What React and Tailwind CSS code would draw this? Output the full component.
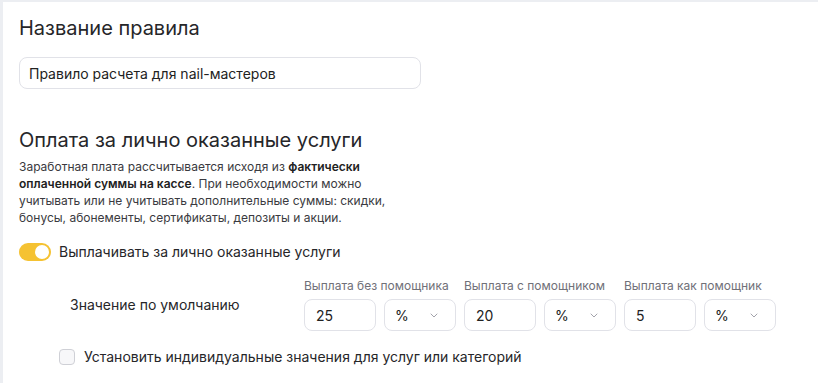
import { useState } from 'react'

const payouts = [
  { label: 'Выплата без помощника', value: '25' },
  { label: 'Выплата с помощником', value: '20' },
  { label: 'Выплата как помощник', value: '5' },
]

function Chevron() {
  return (
    <svg width="8" height="5" viewBox="0 0 8 5" fill="none" className="text-[#a3a3ab]">
      <path d="M1 1l3 3 3-3" stroke="currentColor" strokeWidth="1" strokeLinecap="round" strokeLinejoin="round" />
    </svg>
  )
}

function PayoutField({ label, value }) {
  return (
    <div className="flex flex-col">
      <div className="text-[12px] leading-4 text-[#707078] whitespace-nowrap">{label}</div>
      <div className="flex gap-2 mt-[5px]">
        <div className="w-[72px] h-8 rounded-lg border border-[#e1e2e8] bg-white flex items-center pl-[11px] text-[14px] text-[#222]">
          {value}
        </div>
        <div className="w-[72px] h-8 rounded-lg border border-[#e1e2e8] bg-white flex items-center justify-between pl-[10px] pr-[17px] text-[14px] text-[#222]">
          <span>%</span>
          <Chevron />
        </div>
      </div>
    </div>
  )
}

export default function App() {
  const [enabled, setEnabled] = useState(true)

  return (
    <div className="min-h-screen bg-[#eceef2] pl-[3px] pt-[2px]">
      <div
        className="bg-white min-h-[381px] pl-4 pt-3 text-[#262629]"
        style={{ fontFamily: 'Inter, "Noto Sans", sans-serif' }}
      >
        {/* Rule name */}
        <h2 className="text-[20px] leading-7 font-normal">Название правила</h2>
        <div className="mt-[15px] w-[402px] h-8 rounded-lg border border-[#e1e2e8] flex items-center pl-[9px] text-[14px] text-[#222]">
          Правило расчета для nail-мастеров
        </div>

        {/* Personal services */}
        <h2 className="mt-[37px] text-[20px] leading-7 font-normal">Оплата за лично оказанные услуги</h2>
        <p className="mt-[4px] w-[385px] text-[12px] leading-[17px] text-[#3a3a40]">
          Заработная плата рассчитывается исходя из <b className="font-semibold text-[#222]">фактически</b>{' '}
          <b className="font-semibold text-[#222]">оплаченной суммы на кассе</b>. При необходимости можно
          учитывать или не учитывать дополнительные суммы: скидки, бонусы, абонементы, сертификаты, депозиты и акции.
        </p>

        <div className="mt-[16px] flex items-center gap-2">
          <button
            onClick={() => setEnabled(!enabled)}
            className={`w-8 h-[18px] rounded-full flex items-center px-[2px] ${
              enabled ? 'bg-[#f5c232] justify-end' : 'bg-[#d4d4d8] justify-start'
            }`}
          >
            <span className="w-[14px] h-[14px] rounded-full bg-white" />
          </button>
          <span className="text-[14px] leading-5">Выплачивать за лично оказанные услуги</span>
        </div>

        {/* Default values */}
        <div className="mt-[16px] flex items-center pl-[51px]">
          <div className="w-[234px] text-[14px] leading-5">Значение по умолчанию</div>
          <div className="flex gap-2">
            {payouts.map((p) => (
              <PayoutField key={p.label} {...p} />
            ))}
          </div>
        </div>

        <div className="mt-[16px] pl-[40px] flex items-center gap-[9px]">
          <span className="w-4 h-4 rounded-[4px] border border-[#cfd0d6] bg-[#f7f7f9]" />
          <span className="text-[14px] leading-5">Установить индивидуальные значения для услуг или категорий</span>
        </div>
      </div>
    </div>
  )
}
